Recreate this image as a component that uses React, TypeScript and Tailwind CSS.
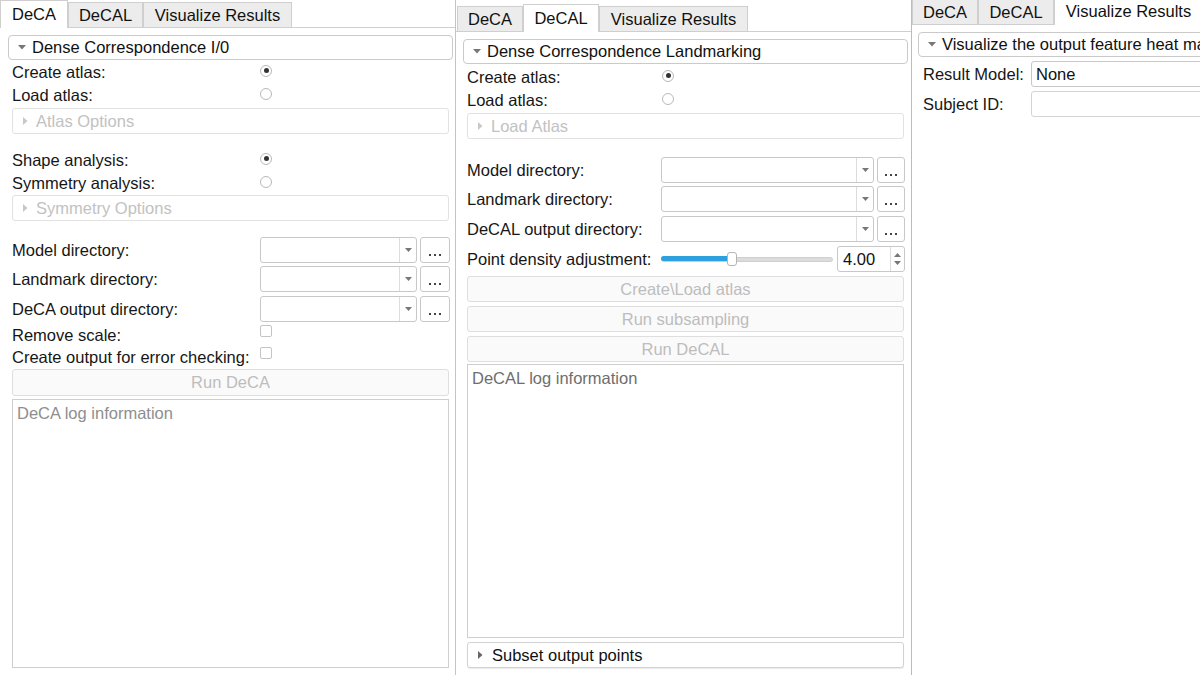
import React from "react";

const font = { fontFamily: '"Liberation Sans", Arial, sans-serif' };

function DownTri({ color = "#777" }: { color?: string }) {
  return (
    <svg width="8" height="5" viewBox="0 0 8 5" className="shrink-0">
      <path d="M0 0 L8 0 L4 4.5 Z" fill={color} />
    </svg>
  );
}
function RightTri({ color = "#c8c8c8" }: { color?: string }) {
  return (
    <svg width="5" height="8" viewBox="0 0 5 8" className="shrink-0">
      <path d="M0 0 L4.5 4 L0 8 Z" fill={color} />
    </svg>
  );
}

function Tab({ label, selected, w }: { label: string; selected?: boolean; w: string }) {
  if (selected) {
    return (
      <div className={`${w} h-[28px] shrink-0 bg-white border-x border-t border-[#cfcfcf] flex items-center justify-center text-[#111]`}>
        {label}
      </div>
    );
  }
  return (
    <div className={`${w} h-[26px] shrink-0 bg-[#ececec] border border-[#cfcfcf] flex items-center justify-center text-[#111]`}>
      {label}
    </div>
  );
}

function Radio({ checked }: { checked?: boolean }) {
  return (
    <div className="w-[12px] h-[12px] rounded-full border border-[#b8b8b8] bg-white flex items-center justify-center shrink-0">
      {checked && <div className="w-[5px] h-[5px] rounded-full bg-[#333]" />}
    </div>
  );
}

function Checkbox() {
  return <div className="w-[12px] h-[12px] border border-[#c4c4c4] rounded-[2px] bg-white shrink-0" />;
}

function Header({ text, cls }: { text: string; cls: string }) {
  return (
    <div className={`${cls} h-[25px] shrink-0 border border-[#cacaca] rounded-[4px] bg-white flex items-center gap-[6px] pl-[9px] text-[#111] whitespace-nowrap overflow-hidden`}>
      <DownTri />
      <span>{text}</span>
    </div>
  );
}

function Collapsed({ text, cls }: { text: string; cls: string }) {
  return (
    <div className={`${cls} h-[26px] shrink-0 border border-[#e2e2e2] rounded-[3px] bg-white flex items-center gap-[8px] pl-[10px] text-[#c2c2c2]`}>
      <RightTri />
      <span>{text}</span>
    </div>
  );
}

function Combo({ w }: { w: string }) {
  return (
    <div className={`${w} h-[26px] shrink-0 border border-[#c8c8c8] rounded-[3px] bg-white flex justify-end`}>
      <div className="w-[17px] h-full border-l border-[#dcdcdc] flex items-center justify-center">
        <svg width="7" height="4" viewBox="0 0 7 4">
          <path d="M0 0 L7 0 L3.5 4 Z" fill="#777" />
        </svg>
      </div>
    </div>
  );
}

function Dots({ w }: { w: string }) {
  return (
    <div className={`${w} h-[26px] shrink-0 border border-[#c8c8c8] rounded-[3px] bg-white flex items-end justify-center pb-[6px]`}>
      <svg width="12" height="2" viewBox="0 0 12 2">
        <rect x="0" y="0" width="2" height="2" fill="#444" />
        <rect x="5" y="0" width="2" height="2" fill="#444" />
        <rect x="10" y="0" width="2" height="2" fill="#444" />
      </svg>
    </div>
  );
}

function DisabledButton({ text, cls }: { text: string; cls: string }) {
  return (
    <div className={`${cls} shrink-0 border border-[#dedede] rounded-[3px] bg-[#fafafa] flex items-center justify-center text-[#bdbdbd]`}>
      {text}
    </div>
  );
}

function PanelDeCA() {
  return (
    <div className="w-[456px] h-[675px] shrink-0 border-r border-[#c4c4c4] flex flex-col overflow-hidden">
      <div className="flex items-end h-[28px] shrink-0">
        <Tab label="DeCA" selected w="w-[68px]" />
        <Tab label="DeCAL" w="w-[75px]" />
        <Tab label="Visualize Results" w="w-[149px]" />
        <div className="flex-1 h-full border-b border-[#cfcfcf]" />
      </div>
      <Header text="Dense Correspondence I/0" cls="mt-[7px] ml-[8px] mr-[2px]" />
      <div className="mt-[1px] ml-[12px] h-[23px] flex items-center">
        <div className="w-[248px]">Create atlas:</div>
        <div className="-mt-[4px]"><Radio checked /></div>
      </div>
      <div className="ml-[12px] h-[23px] flex items-center">
        <div className="w-[248px]">Load atlas:</div>
        <div className="-mt-[4px]"><Radio /></div>
      </div>
      <Collapsed text="Atlas Options" cls="mt-[1px] ml-[12px] mr-[6px]" />
      <div className="mt-[15px] ml-[12px] h-[23px] flex items-center">
        <div className="w-[248px]">Shape analysis:</div>
        <div className="-mt-[4px]"><Radio checked /></div>
      </div>
      <div className="ml-[12px] h-[23px] flex items-center">
        <div className="w-[248px]">Symmetry analysis:</div>
        <div className="-mt-[4px]"><Radio /></div>
      </div>
      <Collapsed text="Symmetry Options" cls="ml-[12px] mr-[6px]" />
      {["Model directory:", "Landmark directory:", "DeCA output directory:"].map((t, i) => (
        <div key={t} className={`${i === 0 ? "mt-[16px]" : i === 1 ? "mt-[3px]" : "mt-[4px]"} ml-[12px] h-[26px] flex items-center`}>
          <div className="w-[248px]">{t}</div>
          <Combo w="w-[157px]" />
          <div className="w-[3px]" />
          <Dots w="w-[30px]" />
        </div>
      ))}
      <div className="mt-[2px] ml-[12px] h-[22px] flex items-center">
        <div className="w-[248px]">Remove scale:</div>
        <div className="-mt-[8px]"><Checkbox /></div>
      </div>
      <div className="ml-[12px] h-[22px] flex items-center">
        <div className="w-[248px] whitespace-nowrap">Create output for error checking:</div>
        <div className="-mt-[8px]"><Checkbox /></div>
      </div>
      <DisabledButton text="Run DeCA" cls="mt-[1px] ml-[12px] mr-[6px] h-[27px]" />
      <div className="mt-[3px] ml-[12px] mr-[6px] h-[269px] border border-[#cfcfcf] bg-white px-[4px] pt-[5px] text-[#8e8e8e]">
        DeCA log information
      </div>
    </div>
  );
}

function PanelDeCAL() {
  return (
    <div className="w-[456px] h-[675px] shrink-0 border-r border-[#b9bcc4] flex flex-col overflow-hidden pt-[4px]">
      <div className="flex items-end h-[28px] shrink-0">
        <div className="w-[1px] h-full border-b border-[#cfcfcf]" />
        <Tab label="DeCA" w="w-[66px]" />
        <Tab label="DeCAL" selected w="w-[76px]" />
        <Tab label="Visualize Results" w="w-[149px]" />
        <div className="flex-1 h-full border-b border-[#cfcfcf]" />
      </div>
      <Header text="Dense Correspondence Landmarking" cls="mt-[7px] ml-[7px] mr-[3px]" />
      <div className="mt-[2px] ml-[11px] h-[23px] flex items-center">
        <div className="w-[195px]">Create atlas:</div>
        <div className="-mt-[4px]"><Radio checked /></div>
      </div>
      <div className="ml-[11px] h-[23px] flex items-center">
        <div className="w-[195px]">Load atlas:</div>
        <div className="-mt-[4px]"><Radio /></div>
      </div>
      <Collapsed text="Load Atlas" cls="mt-[1px] ml-[11px] mr-[7px]" />
      {["Model directory:", "Landmark directory:", "DeCAL output directory:"].map((t, i) => (
        <div key={t} className={`${i === 0 ? "mt-[18px]" : i === 1 ? "mt-[3px]" : "mt-[4px]"} ml-[11px] h-[26px] flex items-center`}>
          <div className="w-[194px] whitespace-nowrap">{t}</div>
          <Combo w="w-[213px]" />
          <div className="w-[3px]" />
          <Dots w="w-[28px]" />
        </div>
      ))}
      <div className="mt-[4px] ml-[11px] h-[26px] flex items-center">
        <div className="w-[194px] whitespace-nowrap">Point density adjustment:</div>
        <div className="w-[172px] h-[16px] relative flex items-center">
          <div className="w-full h-[5px] rounded-full bg-[#dcdcdc] border border-[#cfcfcf]" />
          <div className="absolute left-0 top-[5px] w-[72px] h-[5px] rounded-full bg-[#2ea0de]" />
          <div className="absolute left-[66px] top-[1px] w-[10px] h-[14px] rounded-[3px] bg-white border border-[#b4b4b4]" />
        </div>
        <div className="w-[4px]" />
        <div className="w-[68px] h-[26px] border border-[#c8c8c8] rounded-[3px] bg-white flex items-center">
          <div className="flex-1 pl-[5px] text-[#111]">4.00</div>
          <div className="w-[14px] h-full border-l border-[#dcdcdc] flex flex-col items-center justify-center gap-[4px]">
            <svg width="7" height="4" viewBox="0 0 7 4"><path d="M0 4 L7 4 L3.5 0 Z" fill="#777" /></svg>
            <svg width="7" height="4" viewBox="0 0 7 4"><path d="M0 0 L7 0 L3.5 4 Z" fill="#777" /></svg>
          </div>
        </div>
      </div>
      <DisabledButton text="Create\Load atlas" cls="mt-[4px] ml-[11px] mr-[7px] h-[26px]" />
      <DisabledButton text="Run subsampling" cls="mt-[4px] ml-[11px] mr-[7px] h-[26px]" />
      <DisabledButton text="Run DeCAL" cls="mt-[4px] ml-[11px] mr-[7px] h-[26px]" />
      <div className="mt-[2px] ml-[11px] mr-[7px] h-[274px] border border-[#cfcfcf] bg-white px-[4px] pt-[5px] text-[#6e6e6e]">
        DeCAL log information
      </div>
      <div className="mt-[4px] ml-[11px] mr-[7px] h-[26px] border border-[#d2d2d2] rounded-[3px] bg-white shadow-[0_1px_1px_rgba(0,0,0,0.08)] flex items-center gap-[9px] pl-[10px] text-[#111]">
        <RightTri color="#666" />
        <span>Subset output points</span>
      </div>
    </div>
  );
}

function PanelViz() {
  return (
    <div className="flex-1 h-[678px] -mt-[3px] flex flex-col overflow-hidden">
      <div className="flex items-end h-[28px] shrink-0 w-[320px]">
        <Tab label="DeCA" w="w-[66px]" />
        <Tab label="DeCAL" w="w-[76px]" />
        <Tab label="Visualize Results" selected w="w-[149px]" />
        <div className="flex-1 h-full border-b border-[#cfcfcf]" />
      </div>
      <Header text="Visualize the output feature heat map" cls="mt-[7px] ml-[6px] w-[340px]" />
      <div className="mt-[4px] ml-[11px] h-[26px] flex items-center w-[340px]">
        <div className="w-[108px] whitespace-nowrap">Result Model:</div>
        <div className="w-[220px] h-[26px] border border-[#c8c8c8] rounded-[3px] bg-white flex items-center pl-[4px] text-[#111]">None</div>
      </div>
      <div className="mt-[4px] ml-[11px] h-[26px] flex items-center w-[340px]">
        <div className="w-[108px] whitespace-nowrap">Subject ID:</div>
        <div className="w-[220px] h-[26px] border border-[#d4d4d4] rounded-[3px] bg-white" />
      </div>
    </div>
  );
}

export default function App() {
  return (
    <div className="w-[1200px] h-[675px] bg-white flex overflow-hidden text-[16.5px] text-[#161616] leading-none" style={font}>
      <PanelDeCA />
      <PanelDeCAL />
      <PanelViz />
    </div>
  );
}
